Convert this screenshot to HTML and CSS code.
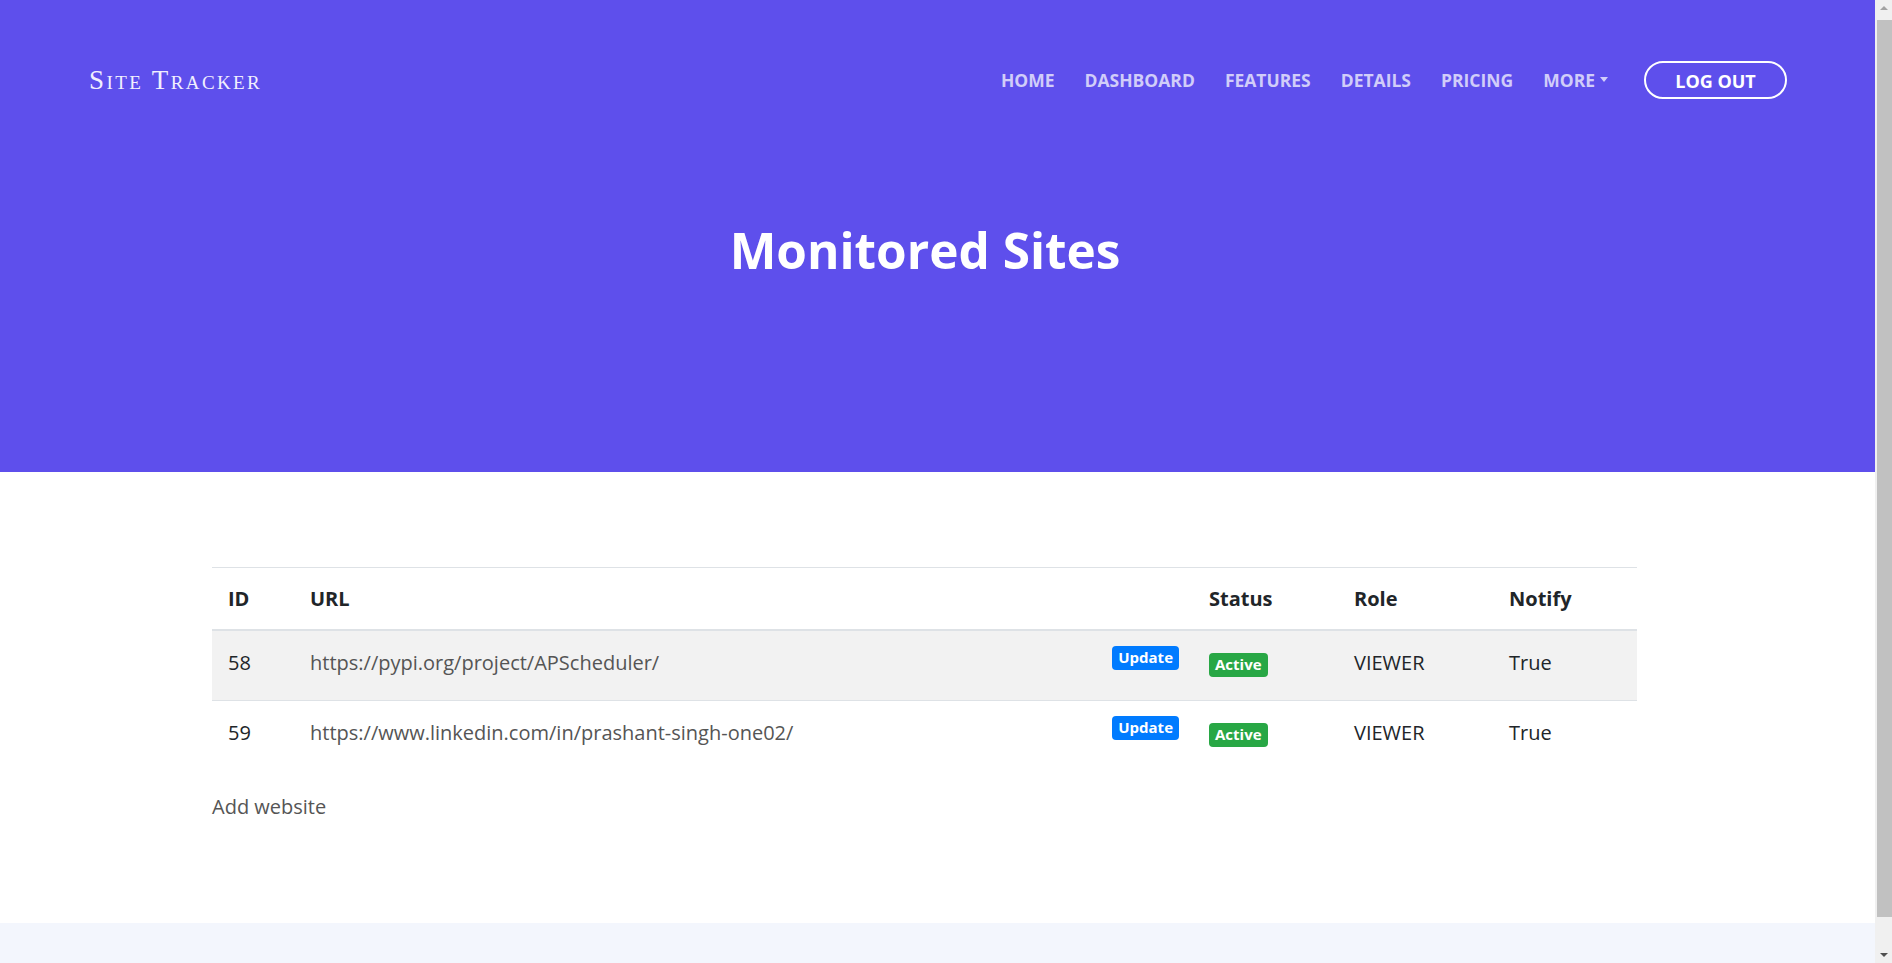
FILE: index.html
```html
<!DOCTYPE html>
<html lang="en">
<head>
<meta charset="utf-8">
<title>Monitored Sites - Site Tracker</title>
<link rel="stylesheet" href="styles.css">
</head>
<body>
<header class="hero">
  <nav class="navbar">
    <a class="brand" href="#">Site Tracker</a>
    <ul class="nav-links">
      <li><a href="#">Home</a></li>
      <li><a href="#">Dashboard</a></li>
      <li><a href="#">Features</a></li>
      <li><a href="#">Details</a></li>
      <li><a href="#">Pricing</a></li>
      <li><a href="#" class="dropdown">More<span class="caret"></span></a></li>
    </ul>
    <a class="btn-logout" href="#">Log out</a>
  </nav>
  <h1 class="hero-title">Monitored Sites</h1>
</header>

<main class="content">
  <table class="sites">
    <thead>
      <tr>
        <th class="c-id">ID</th>
        <th class="c-url">URL</th>
        <th class="c-status">Status</th>
        <th class="c-role">Role</th>
        <th class="c-notify">Notify</th>
      </tr>
    </thead>
    <tbody>
      <tr class="striped">
        <td>58</td>
        <td><span class="badge badge-blue">Update</span><a class="url" href="#">https://pypi.org/project/APScheduler/</a></td>
        <td><span class="badge badge-green">Active</span></td>
        <td>VIEWER</td>
        <td>True</td>
      </tr>
      <tr>
        <td>59</td>
        <td><span class="badge badge-blue">Update</span><a class="url" href="#">https://www.linkedin.com/in/prashant-singh-one02/</a></td>
        <td><span class="badge badge-green">Active</span></td>
        <td>VIEWER</td>
        <td>True</td>
      </tr>
    </tbody>
  </table>
  <a class="add-link" href="#">Add website</a>
</main>

<footer class="footer"></footer>

<div class="scrollbar" aria-hidden="true">
  <span class="sb-btn sb-up"></span>
  <span class="sb-track"><span class="sb-thumb"></span></span>
  <span class="sb-btn sb-down"></span>
</div>
</body>
</html>
```

FILE: styles.css
```css
* { box-sizing: border-box; }

html {
  scrollbar-width: none;
}

::-webkit-scrollbar { display: none; }

html, body {
  padding: 0;
  margin: 0;
}

body {
  margin-right: 17px;
  font-family: "Open Sans", "Noto Sans", sans-serif;
  color: #212529;
  background: #ffffff;
}

a { text-decoration: none; }

/* scrollbar imitation overlay */
.scrollbar {
  position: fixed;
  top: 0;
  right: 0;
  width: 17px;
  height: 100vh;
  background: #f0f0f0;
  display: flex;
  flex-direction: column;
}

.sb-btn {
  height: 17px;
  flex: 0 0 17px;
  display: flex;
  align-items: center;
  justify-content: center;
}

.sb-up::before {
  content: "";
  display: block;
  border-bottom: 4px solid #a3a3a3;
  border-left: 4.5px solid transparent;
  border-right: 4.5px solid transparent;
  margin: 0 0 1px 1px;
}

.sb-down::before {
  content: "";
  display: block;
  border-top: 4px solid #505050;
  border-left: 4.5px solid transparent;
  border-right: 4.5px solid transparent;
  margin: 1px 0 0 1px;
}

.sb-track {
  flex: 1;
  display: flex;
  padding: 3px 0 29px 2px;
}

.sb-thumb {
  flex: 1;
  background: #c1c1c1;
}

/* hero */
.hero {
  background: #5e4fec;
  height: 472px;
  padding-top: 61px;
}

.navbar {
  display: flex;
  align-items: center;
  height: 38px;
  padding: 0 88px 0 89px;
}

.brand {
  font-family: "Liberation Serif", "DejaVu Serif", serif;
  font-variant: small-caps;
  font-size: 27px;
  letter-spacing: 2.4px;
  color: #f1effe;
  margin-right: auto;
}

.nav-links {
  display: flex;
  align-items: center;
  gap: 30px;
  list-style: none;
  margin: 0 36px 0 0;
  padding: 0;
}

.nav-links a {
  font-size: 17.5px;
  font-weight: 700;
  text-transform: uppercase;
  color: rgba(255, 255, 255, 0.72);
  display: flex;
  align-items: center;
}

.caret {
  display: inline-block;
  margin-left: 5px;
  border-top: 5px solid rgba(255, 255, 255, 0.72);
  border-left: 4.5px solid transparent;
  border-right: 4.5px solid transparent;
  margin-top: -2px;
}

.btn-logout {
  width: 143px;
  height: 38px;
  border: 2px solid #ffffff;
  border-radius: 19px;
  display: flex;
  align-items: center;
  justify-content: center;
  color: #ffffff;
  font-size: 18px;
  font-weight: 700;
  text-transform: uppercase;
  padding-top: 1px;
}

.hero-title {
  margin: 127px 0 0 -25px;
  text-align: center;
  font-size: 49.5px;
  line-height: 1;
  font-weight: 700;
  color: #ffffff;
}

/* content */
.content {
  width: 1425px;
  margin: 0 0 0 212px;
  padding: 95px 0 101px;
}

.sites {
  width: 100%;
  border-collapse: collapse;
  font-size: 20px;
  line-height: 30px;
  table-layout: fixed;
}

.sites th {
  text-align: left;
  font-weight: 700;
  padding: 16px 16px 15px;
  border-top: 1px solid #dee2e6;
  border-bottom: 2px solid #dee2e6;
}

.sites td {
  text-align: left;
  padding: 17px 16px 22px;
  border-top: 1px solid #dee2e6;
  vertical-align: middle;
}

.sites tbody tr:first-child td { border-top: none; }

.sites tr.striped td { background: #f2f2f2; }

.c-id { width: 82px; }
.c-url { width: 899px; }
.c-status { width: 145px; }
.c-role { width: 155px; }
.c-notify { width: 144px; }

.url { color: #555555; }

.badge {
  display: inline-block;
  font-size: 15px;
  font-weight: 700;
  line-height: 1;
  padding: 4px 6px 5px;
  border-radius: 4px;
  color: #ffffff;
  white-space: nowrap;
}

.badge-blue {
  background: #007bff;
  float: right;
  margin: -2px -2px 0 0;
}

.badge-green {
  background: #28a745;
  margin-top: 2px;
}

.add-link {
  display: block;
  margin-top: 22px;
  font-size: 20px;
  line-height: 30px;
  color: #555555;
}

.footer {
  background: #f3f6fd;
  height: 74px;
}
```
